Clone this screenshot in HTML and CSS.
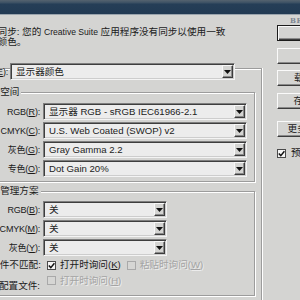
FILE: index.html
```html
<!DOCTYPE html>
<html lang="zh-CN">
<head>
<meta charset="utf-8">
<link rel="stylesheet" href="styles.css">
</head>
<body>
<div class="titlebar"></div>
<div class="dialog">
  <div class="main">
    <p class="msg">未同步: 您的 <span class="lat">Creative Suite</span> 应用程序没有同步以使用一致<br>的颜色。</p>
    <div class="frame">
      <div class="row settings">
        <span class="lbl">设置(<u>E</u>):</span>
        <div class="combo"><span class="val">显示器颜色</span><span class="arr"><svg width="7" height="4" viewBox="0 0 7 4"><polygon points="0,0 7,0 3.5,4" fill="#111"/></svg></span></div>
      </div>
      <fieldset class="group ws">
        <legend>工作空间</legend>
        <div class="rows">
          <div class="row"><span class="lbl">RGB(<u>R</u>):</span><div class="combo"><span class="val">显示器 RGB - sRGB IEC61966-2.1</span><span class="arr"><svg width="7" height="4" viewBox="0 0 7 4"><polygon points="0,0 7,0 3.5,4" fill="#111"/></svg></span></div></div>
          <div class="row"><span class="lbl">CMYK(<u>C</u>):</span><div class="combo"><span class="val">U.S. Web Coated (SWOP) v2</span><span class="arr"><svg width="7" height="4" viewBox="0 0 7 4"><polygon points="0,0 7,0 3.5,4" fill="#111"/></svg></span></div></div>
          <div class="row"><span class="lbl">灰色(<u>G</u>):</span><div class="combo"><span class="val">Gray Gamma 2.2</span><span class="arr"><svg width="7" height="4" viewBox="0 0 7 4"><polygon points="0,0 7,0 3.5,4" fill="#111"/></svg></span></div></div>
          <div class="row"><span class="lbl">专色(<u>O</u>):</span><div class="combo"><span class="val">Dot Gain 20%</span><span class="arr"><svg width="7" height="4" viewBox="0 0 7 4"><polygon points="0,0 7,0 3.5,4" fill="#111"/></svg></span></div></div>
        </div>
      </fieldset>
      <fieldset class="group cm">
        <legend>色彩管理方案</legend>
        <div class="rows">
          <div class="row"><span class="lbl">RGB(<u>B</u>):</span><div class="combo"><span class="val">关</span><span class="arr"><svg width="7" height="4" viewBox="0 0 7 4"><polygon points="0,0 7,0 3.5,4" fill="#111"/></svg></span></div></div>
          <div class="row"><span class="lbl">CMYK(<u>M</u>):</span><div class="combo"><span class="val">关</span><span class="arr"><svg width="7" height="4" viewBox="0 0 7 4"><polygon points="0,0 7,0 3.5,4" fill="#111"/></svg></span></div></div>
          <div class="row"><span class="lbl">灰色(<u>Y</u>):</span><div class="combo"><span class="val">关</span><span class="arr"><svg width="7" height="4" viewBox="0 0 7 4"><polygon points="0,0 7,0 3.5,4" fill="#111"/></svg></span></div></div>
        </div>
        <div class="opt mismatch">
          <span class="lbl">配置文件不匹配:</span>
          <span class="cb"><svg width="7" height="7" viewBox="0 0 7 7"><polyline points="0.8,3.4 2.8,5.6 6.4,1.2" fill="none" stroke="#111" stroke-width="1.5"/></svg></span>
          <span class="cbtext">打开时询问(<u>K</u>)</span>
          <span class="cb off second"></span>
          <span class="cbtext dis">粘贴时询问(<u>W</u>)</span>
        </div>
        <div class="opt missing">
          <span class="lbl">缺少配置文件:</span>
          <span class="cb off"></span>
          <span class="cbtext dis">打开时询问(<u>H</u>)</span>
        </div>
      </fieldset>
    </div>
  </div>
  <div class="side">
    <div class="brand">BR</div>
    <div class="btn def">确定</div>
    <div class="btn b2">取消</div>
    <div class="btn b3">载入(<u>L</u>)...</div>
    <div class="btn b4">存储(<u>S</u>)...</div>
    <div class="btn b5">更多选项(<u>O</u>)</div>
    <div class="preview"><span class="cb"><svg width="7" height="7" viewBox="0 0 7 7"><polyline points="0.8,3.4 2.8,5.6 6.4,1.2" fill="none" stroke="#111" stroke-width="1.5"/></svg></span><span class="cbtext">预览(<u>V</u>)</span></div>
  </div>
</div>
</body>
</html>
```

FILE: styles.css
```css
* { box-sizing: border-box; }
html, body { margin: 0; }
body {
  width: 300px;
  height: 300px;
  overflow: hidden;
  background: #d4d4d2;
  font: 9.6px/10px "Liberation Sans", "Noto Sans CJK SC", sans-serif;
  color: #1a1a1a;
}
u { text-decoration: underline; text-underline-offset: 1px; }

.titlebar {
  height: 15px;
  background: linear-gradient(#55636f 0, #3a4f63 3px, #253e57 4px, #223a53 14px, #9aa4ad 14px);
}

.dialog { display: flex; align-items: flex-start; }

.main { flex: none; width: 302px; margin-left: -40px; }

.msg { margin: 12px 0 0 28px; white-space: nowrap; }
.msg .lat { font-size: 8.6px; }

.frame {
  margin-top: 21px;
  height: 240px;
  border-top: 1px solid #9c9c9c;
  border-right: 1px solid #9c9c9c;
  box-shadow: inset 0 1px 0 #fff, 1px 0 0 #fff;
}

.row { display: flex; align-items: center; height: 17px; }
.lbl { flex: none; text-align: right; white-space: nowrap; }
.rows .lbl, .settings .lbl { font-size: 9px; letter-spacing: -0.2px; }

.settings { margin-top: -6px; }
.settings .lbl { width: 48px; }
.settings .combo { width: 225px; margin-left: 2px; }

.combo {
  height: 17px;
  display: flex;
  align-items: center;
  padding: 0 1px 0 5px;
  border: 1px solid;
  border-color: #7e7e7e #f4f4f4 #f4f4f4 #7e7e7e;
  box-shadow: inset 1px 1px 0 #3e3e3e, inset -1px -1px 0 #cdcdcd;
  background: #ececec;
}
.combo .val { flex: 1; white-space: nowrap; overflow: hidden; color: #222; }
.arr {
  flex: none;
  width: 11px;
  height: 13px;
  display: flex;
  align-items: center;
  justify-content: center;
  background: #d4d4d2;
  border: 1px solid;
  border-color: #f8f8f8 #3c3c3c #3c3c3c #f8f8f8;
  box-shadow: inset -1px -1px 0 #8a8a8a;
}

.group {
  margin: 0 0 0 10px;
  width: 285px;
  min-width: 0;
  border: 1px solid #9c9c9c;
  box-shadow: inset 1px 1px 0 #fff, 1px 1px 0 #fff;
}
.group legend {
  margin-left: 8px;
  padding: 0 2px;
  line-height: 10px;
  background: #d4d4d2;
}
.group.ws { margin-top: 7px; padding: 6px 0 4px 0; }
.group.cm { margin-top: 4px; padding: 5px 0 9px 0; }

.rows { display: grid; row-gap: 2px; }
.rows .lbl { width: 69px; }
.rows .combo { margin-left: 3px; }
.ws .combo { width: 204px; }
.cm .combo { width: 124px; }

.opt { display: flex; align-items: center; height: 10px; }
.opt .lbl { width: 69px; }
.mismatch { margin-top: 4px; }
.missing { margin-top: 6px; align-items: flex-start; }
.missing .lbl { padding-top: 5px; }

.cb {
  flex: none;
  width: 9px;
  height: 9px;
  display: flex;
  align-items: center;
  justify-content: center;
  border: 1px solid #4a4a4a;
  background: #f6f6f6;
}
.cb.off { border-color: #a9a9a9; background: #d6d6d4; }
.opt .cb { margin-left: 7px; }
.opt .cb.second { margin-left: 6px; }
.cbtext { margin-left: 4px; white-space: nowrap; }
.dis { color: #a4a4a4; text-shadow: 1px 1px 0 #ececec; }

.side { flex: none; width: 73px; margin-left: 15px; }
.brand {
  height: 9px;
  margin: 1px 0 0 13px;
  font: bold 7px/9px "DejaVu Serif", serif;
  color: #7d8691;
  letter-spacing: 0.5px;
}
.btn {
  height: 16px;
  display: flex;
  align-items: center;
  justify-content: center;
  white-space: nowrap;
  background: #d4d4d2;
  border: 1px solid;
  border-color: #fafafa #3c3c3c #3c3c3c #fafafa;
  box-shadow: inset -1px -1px 0 #8a8a8a;
}
.btn.def {
  border-color: #1c1c1c;
  box-shadow: inset 1px 1px 0 #fafafa, inset -1px -1px 0 #3c3c3c, inset -2px -2px 0 #8a8a8a;
}
.b2 { margin-top: 7px; }
.b3 { margin-top: 6px; }
.b4 { margin-top: 7px; }
.b5 { margin-top: 12px; }
.preview { display: flex; align-items: center; height: 10px; margin-top: 11px; }
.preview .cbtext { margin-left: 5px; }
```
